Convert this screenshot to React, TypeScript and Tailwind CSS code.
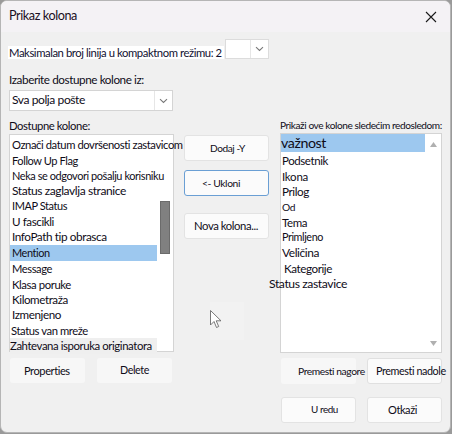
import React, { useLayoutEffect, useRef, useState } from "react";

const F = { fontFamily: 'Lato, "Liberation Sans", sans-serif' };

/* Text whose ink width matches the reference: font size and letter-spacing are computed at runtime from the measured width. */
function Fit({ w, children, className = "" }: { w: number; children: string; className?: string }) {
  const ref = useRef<HTMLSpanElement>(null);
  const [st, setSt] = useState<{ ls: number; fs: number | null }>({ ls: 0, fs: null });
  useLayoutEffect(() => {
    const measure = () => {
      const el = ref.current;
      if (!el) return;
      const pls = el.style.letterSpacing;
      const pfs = el.style.fontSize;
      el.style.letterSpacing = "0px";
      el.style.fontSize = "";
      const natural = el.getBoundingClientRect().width;
      const base = parseFloat(getComputedStyle(el).fontSize) || 12;
      el.style.letterSpacing = pls;
      el.style.fontSize = pfs;
      const n = Math.max(1, children.length);
      const minLs = -0.42;
      let k = 1;
      if (natural + n * minLs > w) k = (w - n * minLs) / natural;
      const ls = (w - natural * k) / n;
      setSt({ ls, fs: k === 1 ? null : base * k });
    };
    measure();
    if ((document as any).fonts?.ready) (document as any).fonts.ready.then(measure);
  }, [w, children]);
  return (
    <span
      ref={ref}
      className={`inline-block whitespace-nowrap leading-none ${className}`}
      style={{ letterSpacing: `${st.ls}px`, fontSize: st.fs !== null ? `${st.fs}px` : undefined }}
    >
      {children}
    </span>
  );
}

type Item = { t: string; w: number; h: string; s: string; sel?: boolean; gray?: boolean; x?: string };

const leftItems: Item[] = [
  { t: "Označi datum dovršenosti zastavicom", w: 171, h: "h-[16px]", s: "text-[12px]" },
  { t: "Follow Up Flag", w: 66, h: "h-[16px]", s: "text-[12px]" },
  { t: "Neka se odgovori pošalju korisniku", w: 152, h: "h-[15px]", s: "text-[11.5px]" },
  { t: "Status zaglavlja stranice", w: 114, h: "h-[15px]", s: "text-[13px]" },
  { t: "IMAP Status", w: 55, h: "h-[15px]", s: "text-[11.5px]" },
  { t: "U fascikli", w: 42, h: "h-[15px]", s: "text-[13px]" },
  { t: "InfoPath tip obrasca", w: 95, h: "h-[16px]", s: "text-[13px]" },
  { t: "Mention", w: 38, h: "h-[16px]", s: "text-[13.5px]", sel: true },
  { t: "Message", w: 40, h: "h-[16px]", s: "text-[11.5px]" },
  { t: "Klasa poruke", w: 59, h: "h-[15px]", s: "text-[11.5px]" },
  { t: "Kilometraža", w: 56, h: "h-[15px]", s: "text-[13px]" },
  { t: "Izmenjeno", w: 49, h: "h-[16px]", s: "text-[14px]" },
  { t: "Status van mreže", w: 77, h: "h-[15px]", s: "text-[11.5px]", x: "-ml-[1px]" },
  { t: "Zahtevana isporuka originatora", w: 142, h: "h-[16px]", s: "text-[11.5px]", gray: true, x: "-ml-[2px]" },
];

const rightItems: Item[] = [
  { t: "važnost", w: 45, h: "h-[18px]", s: "text-[15.5px]", sel: true, x: "-ml-[1px]" },
  { t: "Podsetnik", w: 46, h: "h-[17px]", s: "text-[14px]" },
  { t: "Ikona", w: 26, h: "h-[15px]", s: "text-[11.5px]" },
  { t: "Prilog", w: 27, h: "h-[15px]", s: "text-[14px]" },
  { t: "Od", w: 13, h: "h-[16px]", s: "text-[11px]" },
  { t: "Tema", w: 25, h: "h-[15px]", s: "text-[11.5px]" },
  { t: "Primljeno", w: 41, h: "h-[15px]", s: "text-[11.5px]" },
  { t: "Veličina", w: 37, h: "h-[16px]", s: "text-[14px]" },
  { t: "Kategorije", w: 48, h: "h-[15px]", s: "text-[13px]", x: "ml-[2px]" },
  { t: "Status zastavice", w: 78, h: "h-[16px]", s: "text-[13px]", x: "-ml-[13px]" },
];

function Chevron() {
  return (
    <svg width="9" height="6" viewBox="0 0 9 6" fill="none">
      <path d="M1 1.2 L4.5 4.5 L8 1.2" stroke="#7a7a7a" strokeWidth="1.1" />
    </svg>
  );
}

export default function App() {
  return (
    <div style={F} className="w-[452px] h-[434px] bg-[#9a9a9a] overflow-hidden">
      <div className="w-[451px] h-[433px] bg-[#f0f0f0] rounded-[7px] border-[1.5px] border-[#b5b5b5] overflow-hidden flex flex-col text-[#0f0c18]">
        {/* title bar */}
        <div className="h-[31px] shrink-0 bg-[#f4f2f5] flex items-center justify-between pl-[8px] pr-[13px]">
          <Fit w={68} className="text-[13.5px] text-[#1a0f24]">Prikaz kolona</Fit>
          <svg width="12" height="12" viewBox="0 0 12 12">
            <path d="M1 1 L11 11 M11 1 L1 11" stroke="#1a1a1a" strokeWidth="1.1" />
          </svg>
        </div>

        <div className="flex flex-col pl-[7px] pr-[9px]">
          {/* max lines row */}
          <div className="flex items-start mt-[7px] h-[20px]">
            <div className="mt-[7px] h-[13px] bg-white flex items-center pl-[1px] pr-[2px] text-[#101030]">
              <Fit w={213} className="text-[12px]">Maksimalan broj linija u kompaktnom režimu: 2</Fit>
            </div>
            <div className="ml-[1px] w-[44px] h-[20px] bg-white border border-[#dcdcdc] flex">
              <div className="flex-1" />
              <div className="w-[18px] h-full border-l border-[#e6e6e6] flex items-center justify-center">
                <Chevron />
              </div>
            </div>
          </div>

          <div className="mt-[13px] h-[16px] flex items-center pl-[1px]">
            <Fit w={135} className="text-[13px]">Izaberite dostupne kolone iz:</Fit>
          </div>
          <div className="mt-[2px] w-[164px] h-[21px] bg-white border border-[#d4d4d4] flex ml-[1px]">
            <div className="flex-1 flex items-center pl-[2px]">
              <Fit w={73} className="text-[13px]">Sva polja pošte</Fit>
            </div>
            <div className="w-[18px] h-full border-l border-[#e6e6e6] flex items-center justify-center">
              <Chevron />
            </div>
          </div>

          {/* main area */}
          <div className="flex mt-[6px]">
            {/* left column */}
            <div className="w-[165px] flex flex-col ml-[1px]">
              <div className="h-[17px] flex items-center">
                <Fit w={81} className="text-[12.5px]">Dostupne kolone:</Fit>
              </div>
              <div className="h-[218px] bg-white border border-[#d4d4d4] flex">
                <div className="relative z-10 flex-1 flex flex-col pt-[2px] min-w-0">
                  {leftItems.map((it) => (
                    <div
                      key={it.t}
                      className={`${it.h} shrink-0 flex items-center pl-[2px] ${
                        it.sel ? "bg-[#9dc8ef]" : it.gray ? "bg-[#efefef]" : ""
                      }`}
                    >
                      <Fit w={it.w} className={`${it.s} ${it.x ?? ""}`}>{it.t}</Fit>
                    </div>
                  ))}
                </div>
                <div className="w-[16px] shrink-0 flex flex-col items-center">
                  <div className="mt-[66px] w-[10px] h-[53px] bg-[#808080] border border-[#6b6b6b]" />
                </div>
              </div>
              <div className="flex gap-[12px] mt-[6px] pl-[1px]">
                <div className="w-[75px] h-[25px] rounded-[3px] bg-[#f7f7f7] flex items-center pl-[14px]">
                  <Fit w={46} className="text-[12px]">Properties</Fit>
                </div>
                <div className="w-[75px] h-[25px] rounded-[3px] bg-[#f7f7f7] flex items-center pl-[23px]">
                  <Fit w={29} className="text-[12px]">Delete</Fit>
                </div>
              </div>
            </div>

            {/* middle column */}
            <div className="w-[86px] ml-[10px] flex flex-col pt-[18px]">
              <div className="h-[26px] w-[85px] flex items-center pl-[25px] rounded-[3px] bg-[#fbfbfb] border border-[#e3e3e3]">
                <Fit w={35} className="text-[12px]">Dodaj -Y</Fit>
              </div>
              <div className="mt-[9px] h-[26px] w-[85px] flex items-center pl-[17px] rounded-[3px] bg-[#fbfbfb] border border-[#6a9fd4]">
                <Fit w={38} className="text-[11.5px]">&lt;- Ukloni</Fit>
              </div>
              <div className="mt-[17px] h-[26px] w-[85px] flex items-center pl-[9px] rounded-[3px] bg-[#fbfbfb] border border-[#e3e3e3]">
                <Fit w={64} className="text-[12px]">Nova kolona...</Fit>
              </div>
              <div className="mt-[63px] ml-[26px] w-[34px] h-[38px] bg-[#f2f2f2] pt-[8px]">
                <svg width="12" height="19" viewBox="0 0 12 19">
                  <path d="M0.5 0.5 L0.5 15 L4 11.5 L6.5 17.5 L8.7 16.5 L6.2 10.8 L11 10.8 Z" fill="#ffffff" stroke="#6a6a6a" strokeWidth="0.9" />
                </svg>
              </div>
            </div>

            {/* right column */}
            <div className="w-[163px] ml-[11px] flex flex-col">
              <div className="h-[16px] flex items-center">
                <Fit w={162} className="text-[11px]">Prikaži ove kolone sledećim redosledom:</Fit>
              </div>
              <div className="h-[220px] bg-white border border-[#d4d4d4] flex">
                <div className="relative z-10 flex-1 flex flex-col min-w-0">
                  {rightItems.map((it) => (
                    <div
                      key={it.t}
                      className={`${it.h} shrink-0 flex items-center pl-[1px] ${it.sel ? "bg-[#9dc8ef]" : ""}`}
                    >
                      <Fit w={it.w} className={`${it.s} ${it.x ?? ""}`}>{it.t}</Fit>
                    </div>
                  ))}
                </div>
                <div className="w-[16px] shrink-0 flex flex-col items-center justify-between pt-[8px] pb-[6px]">
                  <svg width="7" height="5" viewBox="0 0 7 5"><path d="M3.5 0 L7 5 L0 5 Z" fill="#b0b0b0" /></svg>
                  <svg width="7" height="5" viewBox="0 0 7 5"><path d="M0 0 L7 0 L3.5 5 Z" fill="#b0b0b0" /></svg>
                </div>
              </div>
              <div className="flex gap-[11px] mt-[5px] pl-[1px]">
                <div className="w-[75px] h-[26px] rounded-[3px] bg-[#f7f7f7] flex items-center pl-[17px]">
                  <Fit w={67} className="text-[11.5px]">Premesti nagore</Fit>
                </div>
                <div className="w-[75px] h-[26px] rounded-[3px] bg-[#fbfbfb] border border-[#e0e0e0] flex items-center pl-[8px]">
                  <Fit w={70} className="text-[12.5px]">Premesti nadole</Fit>
                </div>
              </div>
              <div className="flex gap-[11px] mt-[13px] pl-[1px]">
                <div className="w-[75px] h-[26px] rounded-[3px] bg-[#fbfbfb] border border-[#e3e3e3] flex items-center pl-[29px]">
                  <Fit w={27} className="text-[12px]">U redu</Fit>
                </div>
                <div className="w-[75px] h-[26px] rounded-[3px] bg-[#fbfbfb] border border-[#e3e3e3] flex items-center pl-[20px]">
                  <Fit w={29} className="text-[12.5px]">Otkaži</Fit>
                </div>
              </div>
            </div>
          </div>
        </div>
      </div>
    </div>
  );
}
